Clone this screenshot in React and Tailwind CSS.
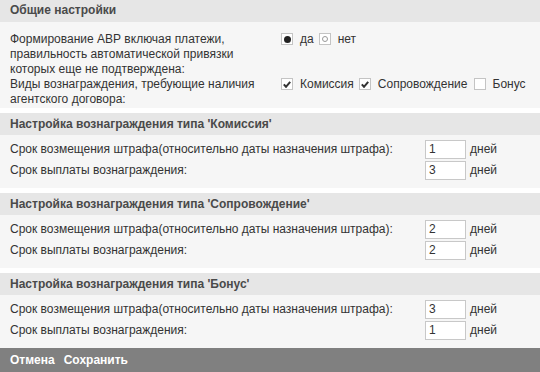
const SECTIONS = [
  { title: "Настройка вознаграждения типа 'Комиссия'", penalty: '1', payout: '3' },
  { title: "Настройка вознаграждения типа 'Сопровождение'", penalty: '2', payout: '2' },
  { title: "Настройка вознаграждения типа 'Бонус'", penalty: '3', payout: '1' },
]

function Header({ children }) {
  return (
    <div className="h-[22px] bg-[#e6e6e6] px-[10px] flex items-center font-bold text-[12px] text-[#4a4a4a]">
      {children}
    </div>
  )
}

function Radio({ checked }) {
  return (
    <span className="w-[12px] h-[12px] border border-[#c4c4c4] bg-white flex items-center justify-center shrink-0">
      {checked ? (
        <span className="w-[7px] h-[7px] rounded-full bg-[#222]" />
      ) : (
        <span className="w-[6px] h-[6px] rounded-full border border-[#999]" />
      )}
    </span>
  )
}

function Check({ checked }) {
  return (
    <span className="w-[12px] h-[12px] border border-[#c4c4c4] bg-white flex items-center justify-center shrink-0">
      {checked && (
        <svg width="8" height="7" viewBox="0 0 8 7">
          <path d="M0.8 3.4 L3 5.8 L7.2 0.8" fill="none" stroke="#333" strokeWidth="2" />
        </svg>
      )}
    </span>
  )
}

function DaysRow({ label, value }) {
  return (
    <div className="flex items-center h-[19px]">
      <span className="w-[415px]">{label}</span>
      <span className="w-[41px] h-[19px] border border-[#c8c8c8] bg-white px-[3px] flex items-center">{value}</span>
      <span className="ml-[4px]">дней</span>
    </div>
  )
}

export default function App() {
  return (
    <div className="w-[540px] h-[372px] bg-white text-[12px] leading-[15px] text-[#333] flex flex-col" style={{ fontFamily: '"Liberation Sans", Arial, sans-serif' }}>
      {/* Общие настройки */}
      <Header>Общие настройки</Header>
      <div className="bg-[#f6f6f6] h-[87px] pt-[10px] px-[10px]">
        <div className="flex items-start">
          <div className="w-[262px]">
            Формирование АВР включая платежи, правильность автоматической привязки которых еще не подтверждена:
          </div>
          <div className="ml-[9px] flex items-center h-[15px]">
            <Radio checked />
            <span className="ml-[7px]">да</span>
            <span className="ml-[5px]"><Radio /></span>
            <span className="ml-[7px]">нет</span>
          </div>
        </div>
        <div className="flex items-start">
          <div className="w-[262px]">Виды вознаграждения, требующие наличия агентского договора:</div>
          <div className="ml-[9px] flex items-center h-[15px]">
            <Check checked />
            <span className="ml-[7px]">Комиссия</span>
            <span className="ml-[5px]"><Check checked /></span>
            <span className="ml-[7px]">Сопровождение</span>
            <span className="ml-[6px]"><Check /></span>
            <span className="ml-[7px]">Бонус</span>
          </div>
        </div>
      </div>

      {SECTIONS.map((s) => (
        <div key={s.title} className="mt-[5px]">
          <Header>{s.title}</Header>
          <div className="bg-[#f6f6f6] h-[53px] pt-[5px] px-[10px] flex flex-col gap-[2px]">
            <DaysRow label="Срок возмещения штрафа(относительно даты назначения штрафа):" value={s.penalty} />
            <DaysRow label="Срок выплаты вознаграждения:" value={s.payout} />
          </div>
        </div>
      ))}

      {/* Footer */}
      <div className="mt-auto h-[24px] bg-[#808080] px-[10px] flex items-center gap-[9px] font-bold text-white">
        <span>Отмена</span>
        <span>Сохранить</span>
      </div>
    </div>
  )
}
